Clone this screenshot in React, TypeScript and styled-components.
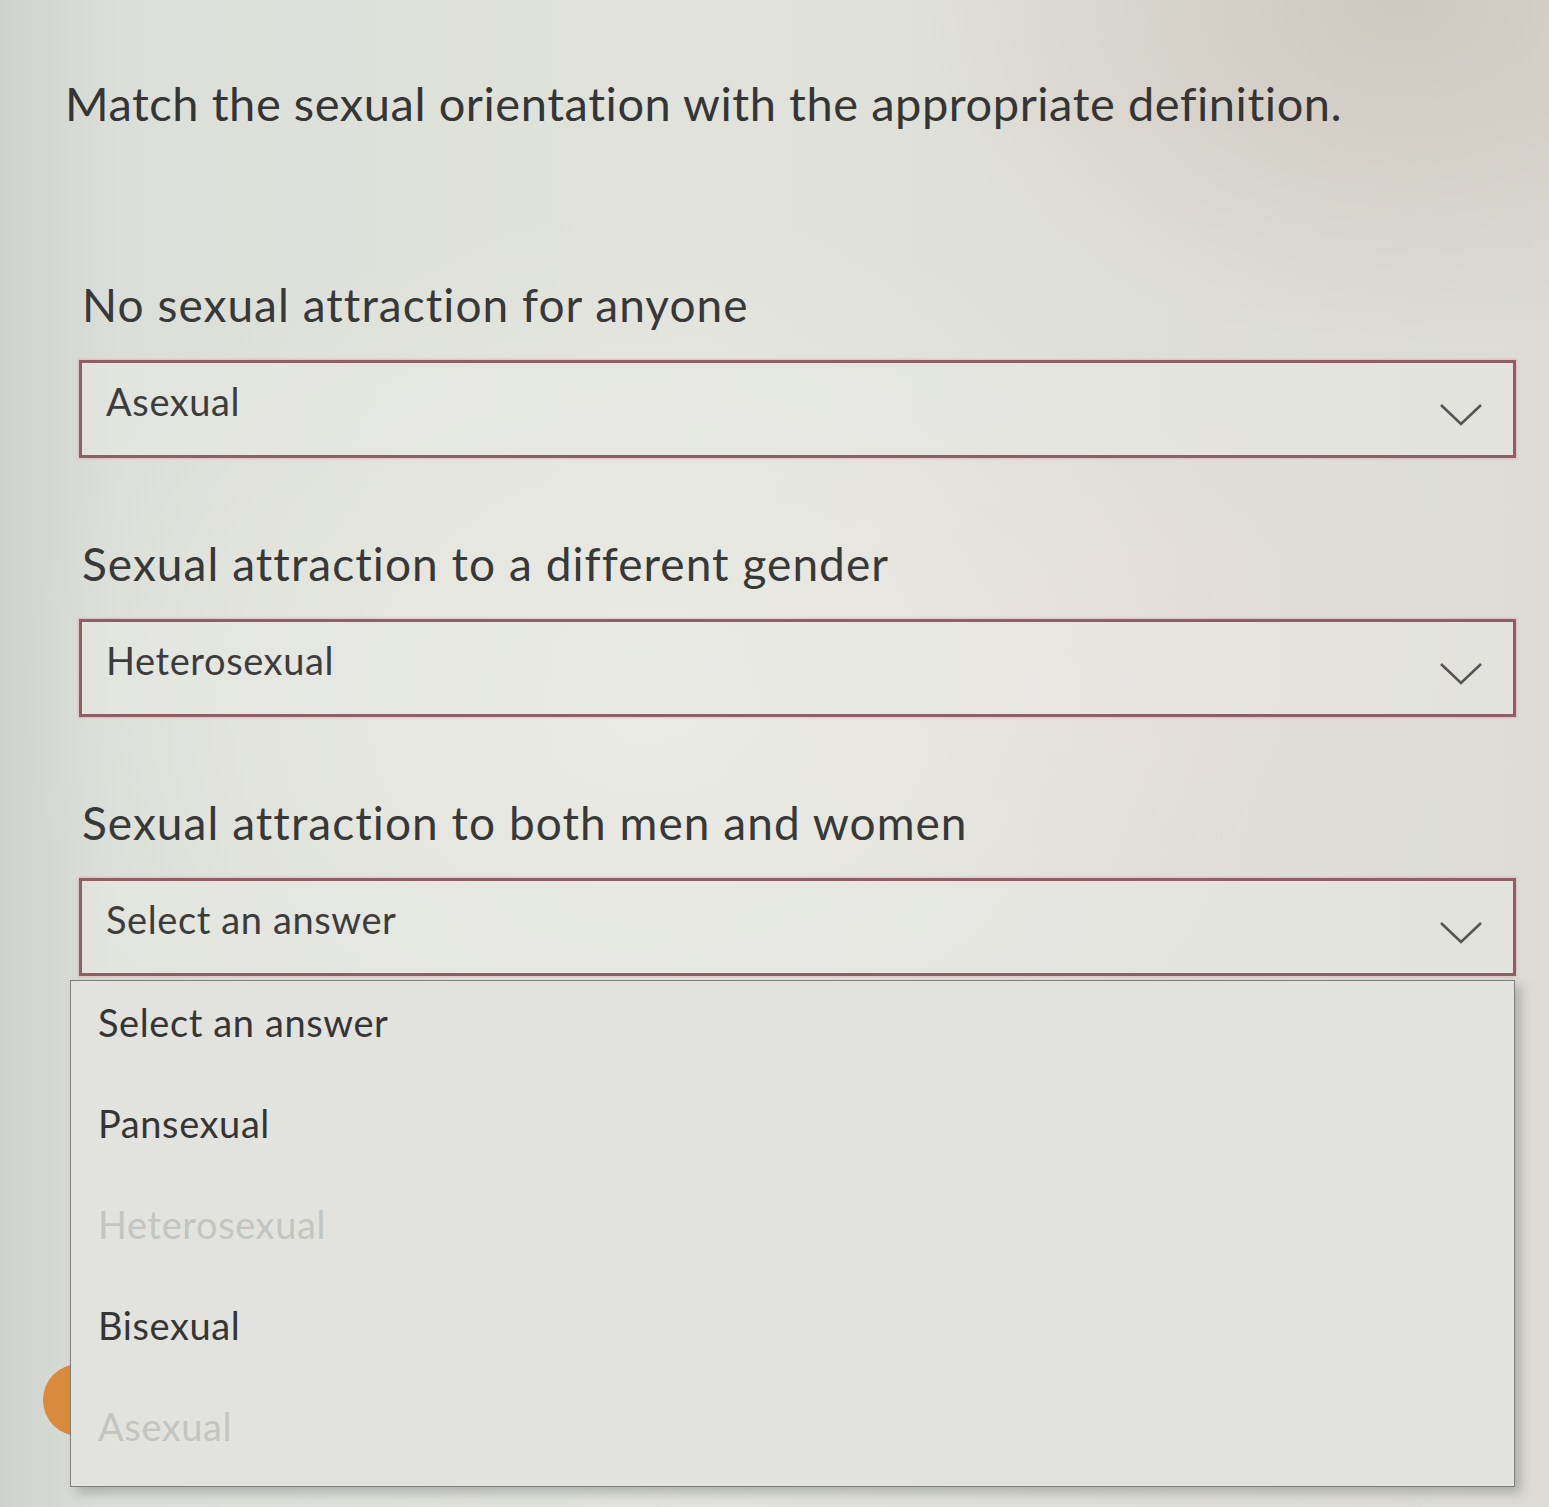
import React from "react";
import styled, { createGlobalStyle } from "styled-components";

const Global = createGlobalStyle`
  html, body {
    margin: 0;
    padding: 0;
  }
  body {
    width: 1549px;
    height: 1507px;
    overflow: hidden;
    font-family: Lato, "Noto Sans", "Liberation Sans", sans-serif;
    color: #3a3a3a;
    background:
      radial-gradient(ellipse 900px 700px at 650px 700px, rgba(236, 236, 230, 0.9), rgba(236, 236, 230, 0) 70%),
      radial-gradient(ellipse 700px 500px at 1400px 0px, rgba(205, 198, 188, 0.9), rgba(205, 198, 188, 0) 70%),
      radial-gradient(ellipse 600px 400px at 1100px 650px, rgba(232, 218, 216, 0.6), rgba(232, 218, 216, 0) 70%),
      linear-gradient(90deg, #cfd3ce 0px, #dcdfd9 120px, #e1e2dc 700px, #dcdbd5 1549px);
  }
`;

const Page = styled.main`
  box-sizing: border-box;
  width: 1549px;
  height: 1507px;
  padding: 74px 33px 0 43px;
  display: flex;
  flex-direction: column;
`;

const Title = styled.h1`
  margin: 0 0 145px 22px;
  font-size: 47px;
  line-height: 58px;
  font-weight: 400;
  color: #353535;
  letter-spacing: 0.55px;
`;

const Field = styled.section<{ $last?: boolean }>`
  position: relative;
  display: flex;
  flex-direction: column;
  margin: 0 0 ${(p) => (p.$last ? 0 : 78)}px 36px;
`;

const Label = styled.label`
  font-size: 46px;
  line-height: 55px;
  color: #383838;
  margin: 0 0 28px 3px;
  letter-spacing: 1.05px;
`;

const SelectBox = styled.div`
  box-sizing: border-box;
  height: 98px;
  border: 3px solid #8f5f63;
  box-shadow: 0 0 2px 1px rgba(225, 150, 160, 0.45);
  display: flex;
  align-items: center;
  justify-content: space-between;
  padding: 0 30px 0 24px;
  background: rgba(232, 233, 227, 0.55);
`;

const Value = styled.span`
  font-size: 38px;
  line-height: 48px;
  color: #3c3c3c;
  margin-top: -16px;
  letter-spacing: 0.6px;
`;

const Chevron = styled.svg`
  width: 44px;
  height: 25px;
  margin-top: 10px;
  flex-shrink: 0;
`;

const Menu = styled.ul`
  position: absolute;
  z-index: 5;
  top: 100%;
  left: -9px;
  right: 1px;
  margin: 4px 0 0;
  padding: 0;
  list-style: none;
  background: #e2e3de;
  border: 1.5px solid #7d7f7c;
  box-shadow: 6px 6px 10px rgba(90, 95, 90, 0.35);
`;

const Option = styled.li<{ $disabled?: boolean }>`
  box-sizing: border-box;
  height: 101px;
  display: flex;
  align-items: center;
  padding: 0 0 20px 27px;
  font-size: 38px;
  letter-spacing: 0.6px;
  color: ${(p) => (p.$disabled ? "#c3c5c0" : "#353535")};
`;

const CheckButton = styled.button`
  align-self: flex-start;
  width: 160px;
  height: 72px;
  margin-top: 388px;
  border: none;
  border-radius: 36px;
  background: #d98a3c;
`;

const ChevronIcon = () => (
  <Chevron viewBox="0 0 44 25" aria-hidden="true">
    <path d="M2 3 L22 22 L42 3" fill="none" stroke="#555" strokeWidth="2.6" strokeLinejoin="miter" />
  </Chevron>
);

const options = [
  { label: "Select an answer", disabled: false },
  { label: "Pansexual", disabled: false },
  { label: "Heterosexual", disabled: true },
  { label: "Bisexual", disabled: false },
  { label: "Asexual", disabled: true },
];

export default function App() {
  return (
    <>
      <Global />
      <Page>
        <Title>Match the sexual orientation with the appropriate definition.</Title>
        <Field>
          <Label>No sexual attraction for anyone</Label>
          <SelectBox>
            <Value>Asexual</Value>
            <ChevronIcon />
          </SelectBox>
        </Field>
        <Field>
          <Label>Sexual attraction to a different gender</Label>
          <SelectBox>
            <Value>Heterosexual</Value>
            <ChevronIcon />
          </SelectBox>
        </Field>
        <Field $last>
          <Label>Sexual attraction to both men and women</Label>
          <SelectBox>
            <Value>Select an answer</Value>
            <ChevronIcon />
          </SelectBox>
          <Menu>
            {options.map((o) => (
              <Option key={o.label} $disabled={o.disabled}>
                {o.label}
              </Option>
            ))}
          </Menu>
        </Field>
        <CheckButton aria-label="Check answer" />
      </Page>
    </>
  );
}
